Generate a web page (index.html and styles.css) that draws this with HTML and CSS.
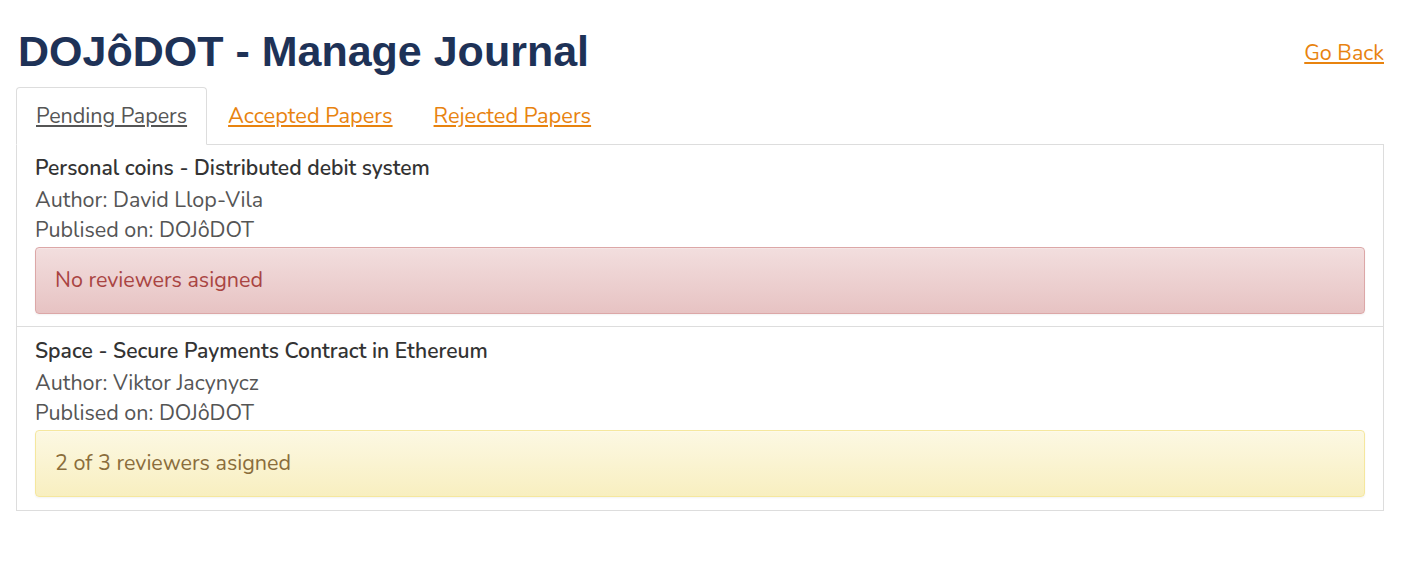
FILE: index.html
```html
<!DOCTYPE html>
<html>
<head>
<meta charset="utf-8">
<link rel="stylesheet" href="styles.css">
</head>
<body>
<div class="container">
  <header class="top">
    <h1 class="title">DOJôDOT - Manage Journal</h1>
    <a class="back" href="#">Go Back</a>
  </header>
  <nav class="tabs">
    <a class="tab active" href="#">Pending Papers</a>
    <a class="tab" href="#">Accepted Papers</a>
    <a class="tab" href="#">Rejected Papers</a>
  </nav>
  <div class="list">
    <div class="item">
      <div class="paper-title">Personal coins - Distributed debit system</div>
      <div class="meta">Author: David Llop-Vila</div>
      <div class="meta">Publised on: DOJôDOT</div>
      <div class="alert danger">No reviewers asigned</div>
    </div>
    <div class="item">
      <div class="paper-title">Space - Secure Payments Contract in Ethereum</div>
      <div class="meta">Author: Viktor Jacynycz</div>
      <div class="meta">Publised on: DOJôDOT</div>
      <div class="alert warning">2 of 3 reviewers asigned</div>
    </div>
  </div>
</div>
</body>
</html>
```
FILE: styles.css
```css
html, body { margin: 0; padding: 0; background: #fff; }
body { font-family: "Nunito", "Noto Sans", sans-serif; color: #555; }
.container { margin: 0 38px 0 16px; }
.top { display: flex; justify-content: space-between; align-items: flex-start; padding-top: 26px; height: 61px; }
.title { margin: 0; font-family: "Liberation Sans", Arial, sans-serif; font-weight: bold; font-size: 43px; line-height: 50px; color: #1e3257; padding-left: 2px; }
.back { font-size: 21.5px; line-height: 26px; color: #e8830f; text-decoration: underline; margin-top: 14px; }
.tabs { display: flex; border-bottom: 1px solid #ddd; height: 57px; }
.tab { display: block; padding: 0 19px; font-size: 21.8px; line-height: 57px; color: #e8830f; text-decoration: underline; border: 1px solid transparent; border-radius: 4px 4px 0 0; margin-bottom: -1px; }
.tab + .tab { margin-left: 1px; }
.tab.active { color: #555; font-size: 21.5px; border-color: #ddd; border-bottom-color: #fff; background: #fff; }
.list { border: 1px solid #ddd; border-top: none; }
.item { padding: 9px 18px 12px 18px; }
.item + .item { border-top: 1px solid #ddd; padding-top: 10px; }
.item:last-child { padding-bottom: 13px; }
.paper-title { font-size: 21.1px; font-weight: 600; color: #333; line-height: 28px; margin-bottom: 3px; }
.meta { font-size: 21.5px; line-height: 30px; color: #555; }
.alert { margin-top: 2px; padding: 0 19px; height: 65px; line-height: 65px; font-size: 21.5px; border: 1px solid; border-radius: 4px; box-shadow: inset 0 1px 0 rgba(255,255,255,.25), 0 1px 2px rgba(0,0,0,.05); }
.danger { color: #a94442; background: linear-gradient(to bottom, #f2dede 0, #e7c3c3 100%); border-color: #dca7a7; }
.warning { color: #8a6d3b; background: linear-gradient(to bottom, #fcf8e3 0, #f8efc0 100%); border-color: #f5e79e; }
```
